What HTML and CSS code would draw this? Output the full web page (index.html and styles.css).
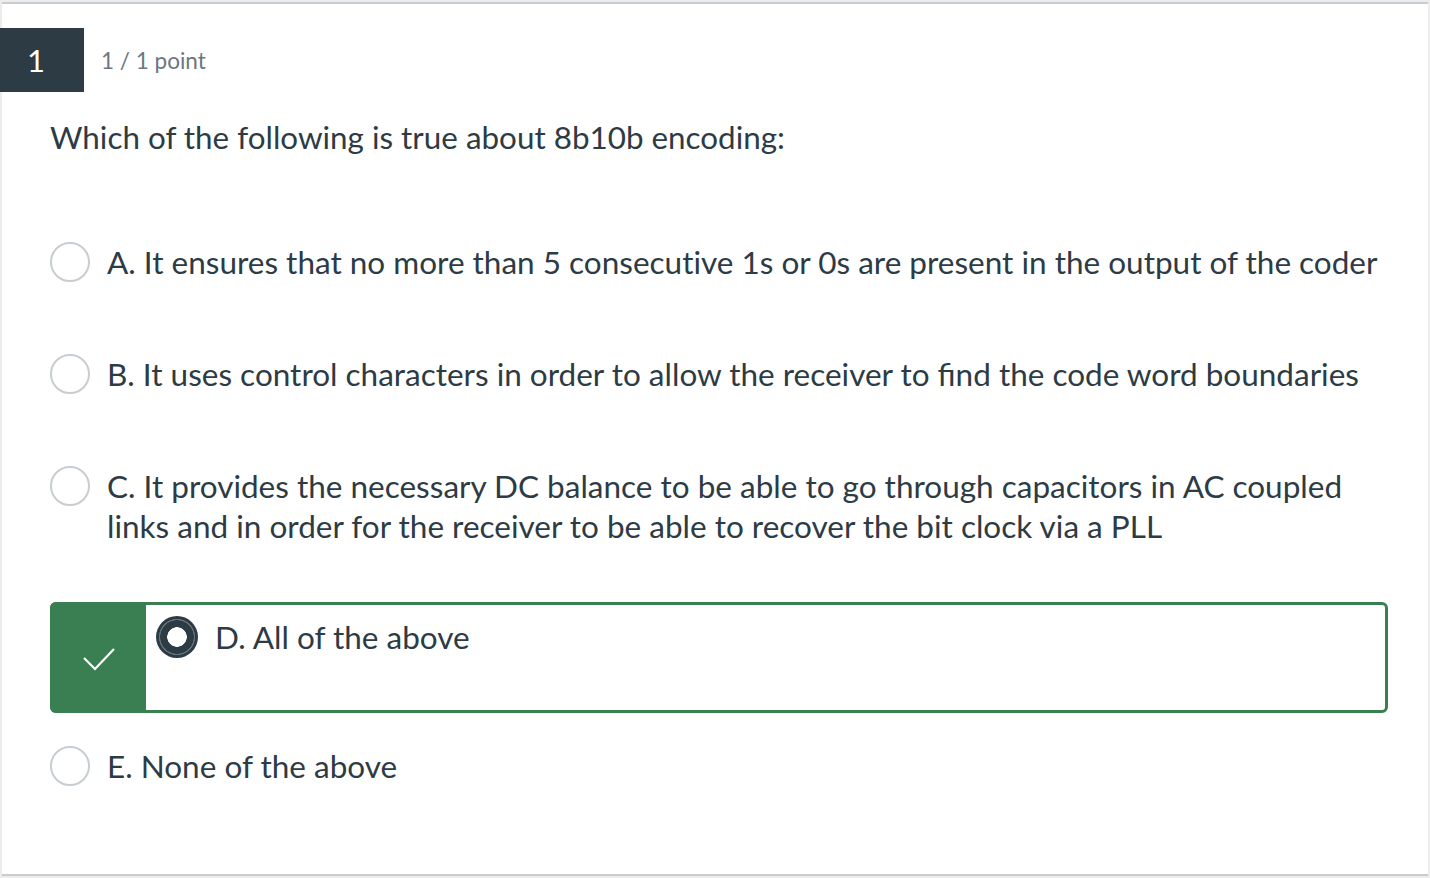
FILE: index.html
```html
<!DOCTYPE html>
<html lang="en">
<head>
<meta charset="utf-8">
<title>Quiz question</title>
<link rel="stylesheet" href="styles.css">
</head>
<body>
<div class="card">
  <div class="header">
    <div class="qnum">1</div>
    <div class="points">1 / 1 point</div>
  </div>
  <div class="question">Which of the following is true about 8b10b encoding:</div>
  <div class="options">
    <div class="option">
      <span class="radio"></span>
      <span class="label">A. It ensures that no more than 5 consecut&zwnj;ive 1s or 0s are present in the output of the coder</span>
    </div>
    <div class="option">
      <span class="radio"></span>
      <span class="label">B. It uses control characters in order to allow the receiver to find the code word boundaries</span>
    </div>
    <div class="option">
      <span class="radio"></span>
      <span class="label">C. It provides the necessary DC balance to be able to go through capacitors in AC coupled links and in order for the receiver to be able to recover the bit clock via a PLL</span>
    </div>
    <div class="correct">
      <div class="correct-flag">
        <svg width="34" height="26" viewBox="0 0 34 26"><path d="M1 12 L12 23 L31 3" fill="none" stroke="#fff" stroke-width="2.2"/></svg>
      </div>
      <div class="correct-body">
        <span class="radio checked"></span>
        <span class="label">D. All of the above</span>
      </div>
    </div>
    <div class="option">
      <span class="radio"></span>
      <span class="label">E. None of the above</span>
    </div>
  </div>
</div>
</body>
</html>
```

FILE: styles.css
```css
html, body {
  margin: 0;
  padding: 0;
}
body {
  background: #ececec;
  font-family: Lato, "Noto Sans", "Liberation Sans", sans-serif;
  color: #2d3b45;
}
.card {
  box-sizing: border-box;
  margin: 2px 2px 0 2px;
  width: 1426px;
  height: 874px;
  background: #fff;
  border-top: 2px solid #c7cdd1;
  border-bottom: 2px solid #c7cdd1;
  padding: 24px 40px 0 48px;
}
.header {
  display: flex;
  align-items: center;
  margin-left: -50px;
  height: 64px;
}
.qnum {
  box-sizing: border-box;
  width: 84px;
  height: 64px;
  background: #2d3b45;
  color: #fff;
  font-size: 31px;
  line-height: 64px;
  padding-left: 27px;
}
.points {
  margin-left: 17px;
  font-size: 22.5px;
  color: #6b7780;
}
.question {
  margin-top: 25px;
  font-size: 31.4px;
  line-height: 40px;
}
.options {
  margin-top: 49px;
  display: flex;
  flex-direction: column;
}
.option {
  display: flex;
  align-items: flex-start;
  padding: 36px 0;
}
.radio {
  flex: none;
  box-sizing: border-box;
  width: 40px;
  height: 40px;
  border-radius: 50%;
  border: 2px solid #c7cdd1;
  background: #fff;
}
.label {
  margin-left: 17px;
  font-size: 31.5px;
  line-height: 40px;
}
.correct {
  margin-top: 20px;
  margin-bottom: -3px;
  display: flex;
  height: 111px;
  box-sizing: border-box;
  border: 3px solid #3a7f52;
  border-radius: 6px;
}
.correct-flag {
  width: 93px;
  flex: none;
  background: #3a7f52;
  display: flex;
  align-items: center;
  justify-content: center;
  margin: -3px 0 -3px -3px;
  border-radius: 6px 0 0 6px;
  padding-left: 3px;
  padding-top: 2px;
}
.correct-body {
  display: flex;
  align-items: flex-start;
  padding: 11px 0 0 10px;
}
.radio.checked {
  width: 42px;
  height: 42px;
  border: none;
  background: radial-gradient(circle, #fff 0 9.5px, #2d3b45 10px 16.5px, #66727b 17px 17.8px, #2d3b45 18.3px);
}
.correct-body .label {
  margin-left: 17px;
  margin-top: 1px;
}
```
